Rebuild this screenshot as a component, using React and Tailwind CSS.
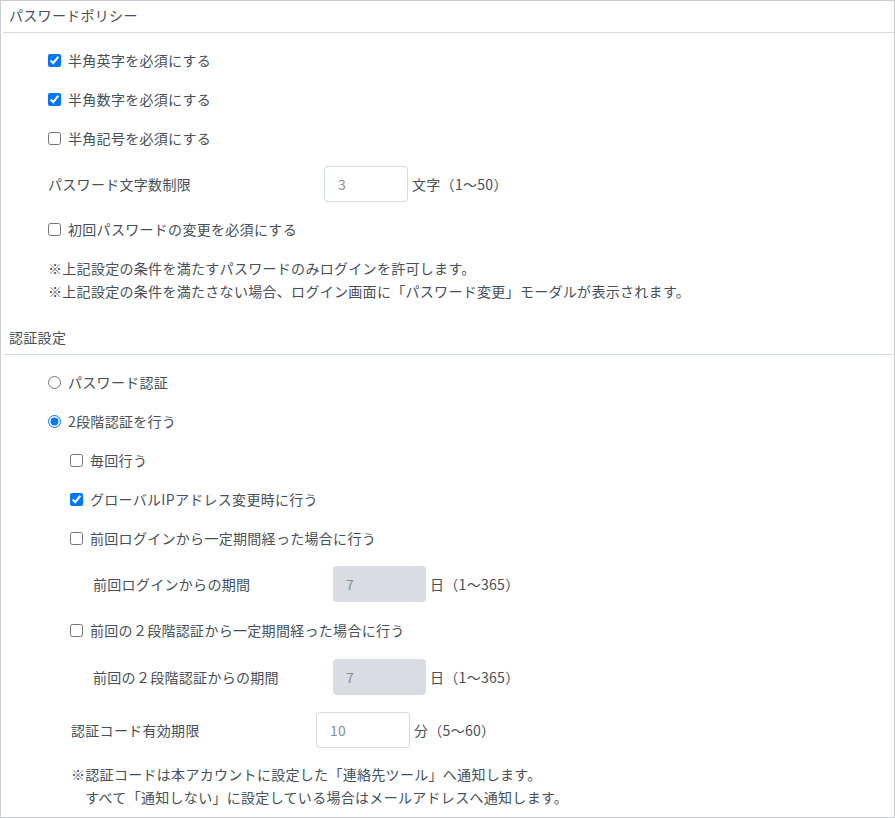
import React from "react";

const font = { fontFamily: '"Noto Sans CJK JP", "Noto Sans", sans-serif' };

function Check({ label, checked }) {
  return (
    <label className="flex items-center h-[39px] gap-[7px]">
      <input type="checkbox" defaultChecked={checked} className="m-0 w-[13px] h-[13px]" />
      <span>{label}</span>
    </label>
  );
}

function Radio({ label, checked }) {
  return (
    <label className="flex items-center h-[39px] gap-[7px]">
      <input type="radio" name="auth" defaultChecked={checked} className="m-0 w-[13px] h-[13px]" />
      <span>{label}</span>
    </label>
  );
}

function NumRow({ label, labelW, value, inputW, unit, disabled, className }) {
  return (
    <div className={"flex items-center " + (className || "")}>
      <div style={{ width: labelW }} className="shrink-0">{label}</div>
      <div
        style={{ width: inputW }}
        className={
          "h-[36px] rounded-[4px] flex items-center pl-[13px] text-[#868e96] shrink-0 " +
          (disabled ? "bg-[#d9dce1]" : "bg-white border border-[#d6dbe0]")
        }
      >
        {value}
      </div>
      <div className="ml-[4px]">{unit}</div>
    </div>
  );
}

export default function App() {
  return (
    <div
      style={font}
      className="w-[895px] h-[818px] border border-[#c9ced4] bg-white text-[14px] tracking-[0.3px] text-[#474f58] overflow-hidden"
    >
      <div className="ml-[2px] h-[32px] border-b border-[#d6dbe0] flex items-center pl-[6px] pb-[2px]">
        パスワードポリシー
      </div>
      <div className="pl-[47px] pt-[8px]">
        <Check label="半角英字を必須にする" checked />
        <Check label="半角数字を必須にする" checked />
        <Check label="半角記号を必須にする" />
        <NumRow className="mt-[8px]" label="パスワード文字数制限" labelW={276} value="3" inputW={84} unit="文字（1〜50）" />
        <div className="mt-[8px]">
          <Check label="初回パスワードの変更を必須にする" />
        </div>
        <div className="mt-[8px] leading-[23px]">
          <div>※上記設定の条件を満たすパスワードのみログインを許可します。</div>
          <div>※上記設定の条件を満たさない場合、ログイン画面に「パスワード変更」モーダルが表示されます。</div>
        </div>
      </div>

      <div className="mt-[20px] ml-[2px] h-[32px] border-b border-[#d6dbe0] flex items-center pl-[6px] pb-[2px]">
        認証設定
      </div>
      <div className="pl-[47px] pt-[8px]">
        <Radio label="パスワード認証" />
        <Radio label="2段階認証を行う" checked />
        <div className="pl-[22px]">
          <Check label="毎回行う" />
          <Check label="グローバルIPアドレス変更時に行う" checked />
          <Check label="前回ログインから一定期間経った場合に行う" />
          <NumRow className="mt-[8px] ml-[23px]" label="前回ログインからの期間" labelW={240} value="7" inputW={93} unit="日（1〜365）" disabled />
          <div className="mt-[9px]">
            <Check label="前回の２段階認証から一定期間経った場合に行う" />
          </div>
          <NumRow className="mt-[9px] ml-[23px]" label="前回の２段階認証からの期間" labelW={240} value="7" inputW={93} unit="日（1〜365）" disabled />
        </div>
        <div className="pl-[23px]">
          <NumRow className="mt-[17px]" label="認証コード有効期限" labelW={245} value="10" inputW={94} unit="分（5〜60）" />
          <div className="mt-[15px] leading-[23px]">
            <div>※認証コードは本アカウントに設定した「連絡先ツール」へ通知します。</div>
            <div>　すべて「通知しない」に設定している場合はメールアドレスへ通知します。</div>
          </div>
        </div>
      </div>
    </div>
  );
}
